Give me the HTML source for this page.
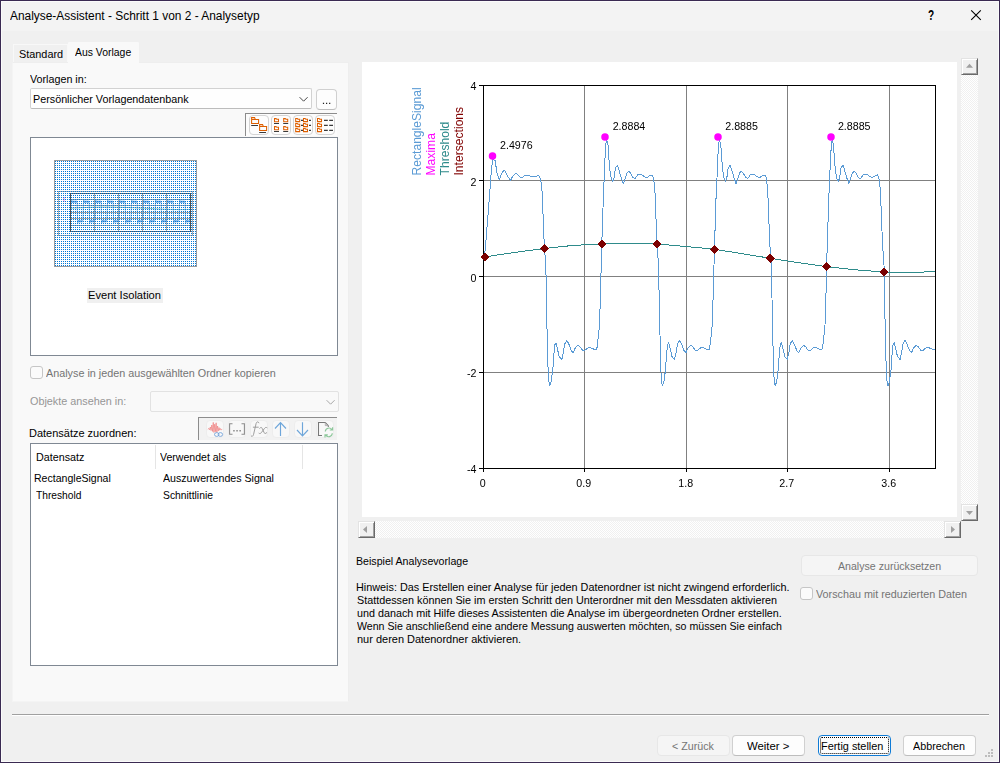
<!DOCTYPE html>
<html lang="de"><head><meta charset="utf-8"><title>Analyse-Assistent - Schritt 1 von 2 - Analysetyp</title>
<style>
html,body{margin:0;padding:0;width:1000px;height:763px;overflow:hidden;background:#f0f0f0;font-family:'Liberation Sans',sans-serif}
#win{position:absolute;left:0;top:0;width:998px;height:761px;border:1px solid #3a2a52;background:#f0f0f0}
#win>*{margin-left:-1px;margin-top:-1px}
.t{position:absolute;white-space:pre;line-height:16px;height:16px;transform-origin:0 0}
.btn{box-sizing:border-box;border:1px solid #d0d0d0;border-bottom-color:#bdbdbd;border-radius:4px;background:#fdfdfd}
.btn.dis{border-color:#e7e7e7;background:#f5f5f5}
.tb{box-sizing:border-box;border:1px solid #d4d4d4;border-radius:4px;background:#fdfdfd;position:absolute;width:20px;height:20px}
.tb.dis{border-color:#ededed;background:#f8f8f8}
.sb{position:absolute;box-sizing:border-box;width:17px;height:17px;background:#f0f0f0;border:1px solid;border-color:#e3e3e3 #696969 #696969 #e3e3e3;box-shadow:inset 1px 1px 0 #fff,inset -1px -1px 0 #a0a0a0}
.track{position:absolute;background:repeating-conic-gradient(#fff 0% 25%,#f0f0f0 0% 50%) 0 0/2px 2px}
.chk{position:absolute;box-sizing:border-box;width:13px;height:13px;border:1px solid #c6c6c6;border-radius:3px;background:#fbfbfb}
</style></head><body>
<div id="win">
<div style="position:absolute;left:1px;top:1px;width:998px;height:30px;background:#f3f3f3"></div>
<div style="position:absolute;left:1px;top:1px;width:998px;height:761px;box-sizing:border-box;border:1px solid #fbfbfb;pointer-events:none;z-index:5"></div>
<svg style="position:absolute;left:925px;top:6px" width="64" height="20" viewBox="925 6 64 20"><path d="M971.2 10.3L980.8 19.9M980.8 10.3L971.2 19.9" stroke="#000" stroke-width="1.1" fill="none"/></svg>
<div class="t" style="left:928.2px;top:7px;font-size:14px;font-weight:bold;color:#000;transform:scaleX(0.72)">?</div>
<div style="position:absolute;left:12px;top:62px;width:337px;height:640px;box-sizing:border-box;background:#f9f9f9;border:1px solid #eeeeee;border-left-color:#f4f4f4;border-bottom-color:#f4f4f4"></div>
<div style="position:absolute;left:13px;top:44px;width:55px;height:18px;box-sizing:border-box;background:#f0f0f0;border:1px solid #f8f8f8;border-bottom:none"></div>
<div style="position:absolute;left:68px;top:42px;width:71px;height:21px;background:#f9f9f9;border-radius:1px 1px 0 0"></div>
<div style="position:absolute;left:30px;top:88px;width:282px;height:21px;box-sizing:border-box;border:1px solid #d2d2d2;border-bottom-color:#bcbcbc;border-radius:2px;background:#fefefe"><svg style="position:absolute;left:267.6px;top:7px" width="10" height="7" viewBox="0 0 10 7"><path d="M0.6 1.2L4.6 5.2L8.6 1.2" fill="none" stroke="#484848" stroke-width="1"/></svg></div>
<div class="btn" style="position:absolute;left:316px;top:89px;width:21px;height:21px;"><svg style="position:absolute;left:0;top:0" width="19" height="19" viewBox="0 0 19 19"><path d="M5.9 13.4h1.2M9 13.4h1.2M12.1 13.4h1.2" stroke="#222" stroke-width="1.2"/></svg></div>
<div style="position:absolute;left:245px;top:113px;width:92px;height:23px;box-sizing:border-box;background:#fcfcfc;border-left:1px solid #8c8c8c;border-top:1px solid #8c8c8c"></div>
<div style="position:absolute;left:30px;top:137px;width:308px;height:219px;box-sizing:border-box;border:1px solid #7f8893;background:#fff"></div>
<div style="position:absolute;left:87px;top:288px;width:76px;height:15px;background:#f0f0f0"></div>
<div class="chk" style="left:30px;top:366px"></div>
<div style="position:absolute;left:150px;top:391px;width:189px;height:21px;box-sizing:border-box;border:1px solid #e2e2e2;border-radius:2px;background:#f9f9f9"><svg style="position:absolute;left:175.2px;top:7px" width="10" height="7" viewBox="0 0 10 7"><path d="M0.6 1.2L4.6 5.2L8.6 1.2" fill="none" stroke="#a8a8a8" stroke-width="1"/></svg></div>
<div style="position:absolute;left:198px;top:417px;width:139px;height:23px;box-sizing:border-box;background:#f2f2f2;border-left:1px solid #8c8c8c;border-top:1px solid #8c8c8c"></div>
<div style="position:absolute;left:30px;top:443px;width:308px;height:223px;box-sizing:border-box;border:1px solid #7f8893;background:#fff"><div style="position:absolute;left:124px;top:1px;width:1px;height:24px;background:#e5e5e5"></div><div style="position:absolute;left:271px;top:1px;width:1px;height:24px;background:#e5e5e5"></div></div>
<svg style="position:absolute;left:362px;top:62px;will-change:transform" width="595" height="455" viewBox="362 62 595 455" font-family="Liberation Sans, sans-serif">
<rect x="362" y="62" width="595" height="455" fill="#fff"/>
<text transform="translate(421 175.5) rotate(-90)" font-size="12.12" fill="#5b9bd5">RectangleSignal</text>
<text transform="translate(435 175.5) rotate(-90)" font-size="12.12" fill="#ff00ff">Maxima</text>
<text transform="translate(449 175.5) rotate(-90)" font-size="12.12" fill="#2e8b8b">Threshold</text>
<text transform="translate(463 175.5) rotate(-90)" font-size="12.12" fill="#800000">Intersections</text>
<g shape-rendering="crispEdges" fill="#808080">
<rect x="584" y="86" width="1" height="382"/>
<rect x="686" y="86" width="1" height="382"/>
<rect x="787" y="86" width="1" height="382"/>
<rect x="889" y="86" width="1" height="382"/>
<rect x="484" y="180" width="451" height="1"/>
<rect x="484" y="276" width="451" height="1"/>
<rect x="484" y="372" width="451" height="1"/>
</g>
<polyline fill="none" stroke="#2e8b8b" stroke-width="1" shape-rendering="crispEdges" stroke-linejoin="round" points="483.5,257.3 484.7,257.0 500.0,254.6 520.0,251.7 544.5,248.5 565.0,246.2 585.0,244.7 601.8,243.9 630.0,243.4 656.8,243.9 680.0,246.0 700.0,247.8 714.5,249.3 740.0,253.3 770.3,258.3 800.0,262.9 826.7,266.7 855.0,269.8 883.8,272.0 910.0,272.4 921.0,272.5 925.0,271.8 935.0,271.5"/>
<polyline fill="none" stroke="#5b9bd5" stroke-width="1" shape-rendering="crispEdges" stroke-linejoin="round" points="483.5,257.5 484.3,256.0 485.5,247.0 487.2,225.0 489.2,200.0 490.4,183.2 491.6,168.0 492.8,159.2 495.2,160.8 496.8,172.0 499.2,179.6 502.0,172.8 504.4,170.2 507.6,176.0 510.4,180.6 512.8,176.0 516.0,173.0 520.4,177.2 522.4,177.4 524.4,175.4 529.6,175.4 530.8,176.6 536.4,176.4 538.0,175.2 539.6,176.4 540.8,180.8 541.4,185.0 542.2,193.0 544.2,244.0 545.8,265.0 546.5,298.0 546.9,325.0 547.2,335.0 547.9,365.0 548.8,381.0 549.8,386.0 551.2,381.0 552.8,370.0 553.8,355.0 554.8,345.0 556.0,342.8 557.2,348.0 559.2,356.5 561.8,359.5 563.2,353.0 564.8,344.0 566.8,340.5 568.8,344.0 571.2,350.5 573.2,352.8 575.2,348.0 578.0,345.3 580.2,347.0 582.8,350.5 584.8,350.5 587.2,348.2 589.8,347.3 592.2,348.5 594.8,349.5 596.8,349.0 597.5,344.0 598.5,335.0 599.5,325.0 600.4,298.0 601.2,265.0 601.6,250.0 603.5,193.0 604.2,178.0 604.9,160.0 606.0,143.0 606.8,140.5 608.0,145.0 609.0,160.0 610.0,171.0 611.2,178.0 612.8,181.5 614.0,178.0 615.5,168.0 617.5,165.2 619.0,170.0 621.0,177.0 623.3,183.5 625.0,179.0 626.8,173.0 628.8,171.2 630.5,173.0 633.0,177.8 635.2,178.3 637.5,175.0 640.0,174.2 642.0,174.8 644.5,176.8 647.0,177.5 650.0,175.5 652.0,175.0 653.2,177.0 654.3,184.0 655.0,193.0 657.0,244.0 658.5,265.0 659.2,298.0 659.6,325.0 660.0,335.0 660.6,365.0 661.5,381.0 662.5,386.0 664.0,381.0 665.5,370.0 666.5,355.0 667.5,345.0 668.8,342.8 670.0,348.0 672.0,356.5 674.5,359.5 676.0,353.0 677.5,344.0 679.5,340.5 681.5,344.0 684.0,350.5 686.0,352.8 688.0,348.0 690.8,345.3 693.0,347.0 695.5,350.5 697.5,350.5 700.0,348.2 702.5,347.3 705.0,348.5 707.5,349.5 709.5,349.0 710.2,344.0 711.2,335.0 712.2,325.0 713.1,298.0 714.0,265.0 714.4,250.0 716.2,193.0 717.0,178.0 717.6,160.0 718.8,143.0 719.5,140.5 720.8,145.0 721.8,160.0 722.8,171.0 724.0,178.0 725.5,181.5 726.8,178.0 728.2,168.0 730.2,165.2 731.8,170.0 733.8,177.0 736.0,183.5 737.8,179.0 739.5,173.0 741.5,171.2 743.2,173.0 745.8,177.8 748.0,178.3 750.2,175.0 752.8,174.2 754.8,174.8 757.2,176.8 759.8,177.5 762.8,175.5 764.8,175.0 766.0,177.0 767.0,184.0 767.8,193.0 769.8,244.0 771.2,265.0 772.0,298.0 772.4,325.0 772.8,335.0 773.4,365.0 774.2,381.0 775.2,386.0 776.8,381.0 778.2,370.0 779.2,355.0 780.2,345.0 781.5,342.8 782.8,348.0 784.8,356.5 787.2,359.5 788.8,353.0 790.2,344.0 792.2,340.5 794.2,344.0 796.8,350.5 798.8,352.8 800.8,348.0 803.5,345.3 805.8,347.0 808.2,350.5 810.2,350.5 812.8,348.2 815.2,347.3 817.8,348.5 820.2,349.5 822.2,349.0 823.0,344.0 824.0,335.0 825.0,325.0 825.9,298.0 826.7,265.0 827.1,250.0 829.0,193.0 829.7,178.0 830.4,160.0 831.5,143.0 832.3,140.5 833.5,145.0 834.5,160.0 835.5,171.0 836.7,178.0 838.3,181.5 839.5,178.0 841.0,168.0 843.0,165.2 844.5,170.0 846.5,177.0 848.8,183.5 850.5,179.0 852.3,173.0 854.3,171.2 856.0,173.0 858.5,177.8 860.7,178.3 863.0,175.0 865.5,174.2 867.5,174.8 870.0,176.8 872.5,177.5 875.5,175.5 877.5,175.0 878.7,177.0 879.8,184.0 880.5,193.0 882.5,244.0 884.0,265.0 884.7,298.0 885.1,325.0 885.5,335.0 886.1,365.0 887.0,381.0 888.0,386.0 889.5,381.0 891.0,370.0 892.0,355.0 893.0,345.0 894.3,342.8 895.5,348.0 897.5,356.5 900.0,359.5 901.5,353.0 903.0,344.0 905.0,340.5 907.0,344.0 909.5,350.5 911.5,352.8 913.5,348.0 916.3,345.3 918.5,347.0 921.0,350.5 923.0,350.5 925.5,348.2 928.0,347.3 930.5,348.5 933.0,349.5 935.0,349.0"/>
<g shape-rendering="crispEdges" fill="#000">
<rect x="483" y="85" width="453" height="1"/><rect x="483" y="468" width="453" height="1"/><rect x="483" y="85" width="1" height="384"/><rect x="935" y="85" width="1" height="384"/>
<rect x="479" y="85" width="4" height="1"/>
<rect x="479" y="180" width="4" height="1"/>
<rect x="479" y="276" width="4" height="1"/>
<rect x="479" y="372" width="4" height="1"/>
<rect x="479" y="468" width="4" height="1"/>
<rect x="483" y="469" width="1" height="3"/>
<rect x="584" y="469" width="1" height="3"/>
<rect x="686" y="469" width="1" height="3"/>
<rect x="787" y="469" width="1" height="3"/>
<rect x="889" y="469" width="1" height="3"/>
</g>
<path d="M480.1 257.0L484.7 252.4L489.3 257.0L484.7 261.6Z" fill="#7b0000" shape-rendering="crispEdges"/>
<path d="M539.9 248.5L544.5 243.9L549.1 248.5L544.5 253.1Z" fill="#7b0000" shape-rendering="crispEdges"/>
<path d="M597.2 243.9L601.8 239.3L606.4 243.9L601.8 248.5Z" fill="#7b0000" shape-rendering="crispEdges"/>
<path d="M652.2 243.9L656.8 239.3L661.4 243.9L656.8 248.5Z" fill="#7b0000" shape-rendering="crispEdges"/>
<path d="M709.9 249.3L714.5 244.7L719.1 249.3L714.5 253.9Z" fill="#7b0000" shape-rendering="crispEdges"/>
<path d="M765.7 258.3L770.3 253.7L774.9 258.3L770.3 262.9Z" fill="#7b0000" shape-rendering="crispEdges"/>
<path d="M822.1 266.7L826.7 262.1L831.3 266.7L826.7 271.3Z" fill="#7b0000" shape-rendering="crispEdges"/>
<path d="M879.2 272.0L883.8 267.4L888.4 272.0L883.8 276.6Z" fill="#7b0000" shape-rendering="crispEdges"/>
<circle cx="492.5" cy="156" r="3.75" fill="#ff00ff"/>
<text x="500.0" y="148.8" font-size="10.67" fill="#000">2.4976</text>
<circle cx="605" cy="137" r="3.75" fill="#ff00ff"/>
<text x="612.7" y="129.8" font-size="10.67" fill="#000">2.8884</text>
<circle cx="718" cy="137" r="3.75" fill="#ff00ff"/>
<text x="725.3" y="129.8" font-size="10.67" fill="#000">2.8885</text>
<circle cx="831" cy="137" r="3.75" fill="#ff00ff"/>
<text x="837.9" y="129.8" font-size="10.67" fill="#000">2.8885</text>
<text x="476.5" y="90.20" font-size="10.67" text-anchor="end" fill="#000">4</text>
<text x="476.5" y="185.95" font-size="10.67" text-anchor="end" fill="#000">2</text>
<text x="476.5" y="281.70" font-size="10.67" text-anchor="end" fill="#000">0</text>
<text x="476.5" y="377.45" font-size="10.67" text-anchor="end" fill="#000">-2</text>
<text x="476.5" y="473.20" font-size="10.67" text-anchor="end" fill="#000">-4</text>
<text x="482.7" y="487" font-size="10.67" text-anchor="middle" fill="#000">0</text>
<text x="583.7" y="487" font-size="10.67" text-anchor="middle" fill="#000">0.9</text>
<text x="685.7" y="487" font-size="10.67" text-anchor="middle" fill="#000">1.8</text>
<text x="786.7" y="487" font-size="10.67" text-anchor="middle" fill="#000">2.7</text>
<text x="888.7" y="487" font-size="10.67" text-anchor="middle" fill="#000">3.6</text>
</svg>
<div class="track" style="left:961px;top:75px;width:17px;height:429px"></div>
<div class="track" style="left:375px;top:521px;width:569px;height:17px"></div>
<div class="sb" style="left:961px;top:58px"><svg width="15" height="15" viewBox="0 0 15 15" style="position:absolute;left:0;top:0"><path d="M4 8.7L7.5 4.7L11 8.7Z" fill="#a0a0a0"/></svg></div>
<div class="sb" style="left:961px;top:504px"><svg width="15" height="15" viewBox="0 0 15 15" style="position:absolute;left:0;top:0"><path d="M4 6L7.5 10L11 6Z" fill="#a0a0a0"/></svg></div>
<div class="sb" style="left:358px;top:521px"><svg width="15" height="15" viewBox="0 0 15 15" style="position:absolute;left:0;top:0"><path d="M8 4L4 7.5L8 11Z" fill="#a0a0a0"/></svg></div>
<div class="sb" style="left:944px;top:521px"><svg width="15" height="15" viewBox="0 0 15 15" style="position:absolute;left:0;top:0"><path d="M6 4L10 7.5L6 11Z" fill="#a0a0a0"/></svg></div>
<div class="btn dis" style="position:absolute;left:801px;top:555px;width:177px;height:21px;"></div>
<div class="chk" style="left:800px;top:587px"></div>
<div style="position:absolute;left:12px;top:714px;width:977px;height:1px;background:#a0a0a0"></div>
<div style="position:absolute;left:12px;top:715px;width:977px;height:1px;background:#fff"></div>
<div class="btn dis" style="position:absolute;left:657px;top:735px;width:73px;height:21px;"></div>
<div class="btn" style="position:absolute;left:732px;top:735px;width:73px;height:21px;"></div>
<div class="btn" style="position:absolute;left:818px;top:735px;width:73px;height:21px;border:1px solid #0f7bd6;"><div style="position:absolute;left:1px;top:1px;right:1px;bottom:1px;border:1px dotted #000;border-radius:2px"></div></div>
<div class="btn" style="position:absolute;left:903px;top:735px;width:73px;height:21px;"></div>
<div style="position:absolute;left:991px;top:749px;width:2px;height:2px;background:#bdbdbd"></div><div style="position:absolute;left:988px;top:752px;width:2px;height:2px;background:#bdbdbd"></div><div style="position:absolute;left:991px;top:752px;width:2px;height:2px;background:#bdbdbd"></div><div style="position:absolute;left:985px;top:755px;width:2px;height:2px;background:#bdbdbd"></div><div style="position:absolute;left:988px;top:755px;width:2px;height:2px;background:#bdbdbd"></div><div style="position:absolute;left:991px;top:755px;width:2px;height:2px;background:#bdbdbd"></div>
<div id="t_title" class="t" style="left:10.30px;top:8.04px;font-size:12px;color:#000;transform:scaleX(0.9924);">Analyse-Assistent - Schritt 1 von 2 - Analysetyp</div>
<div id="t_tab1" class="t" style="left:18.50px;top:45.62px;font-size:11.5px;color:#000;transform:scaleX(0.9457);">Standard</div>
<div id="t_tab2" class="t" style="left:75.00px;top:44.02px;font-size:11.5px;color:#000;transform:scaleX(0.9065);">Aus Vorlage</div>
<div id="t_vorl" class="t" style="left:30.00px;top:70.52px;font-size:11.5px;color:#000;transform:scaleX(0.9333);">Vorlagen in:</div>
<div id="t_combo" class="t" style="left:32.56px;top:90.52px;font-size:11.5px;color:#000;transform:scaleX(0.9364);">Persönlicher Vorlagendatenbank</div>
<div id="t_event" class="t" style="left:87.63px;top:286.52px;font-size:11.5px;color:#000;transform:scaleX(0.9676);">Event Isolation</div>
<div id="t_chk1" class="t" style="left:46.00px;top:364.52px;font-size:11.5px;color:#747474;transform:scaleX(0.9388);">Analyse in jeden ausgewählten Ordner kopieren</div>
<div id="t_obj" class="t" style="left:30.00px;top:392.52px;font-size:11.5px;color:#969696;transform:scaleX(0.9412);">Objekte ansehen in:</div>
<div id="t_ds" class="t" style="left:29.05px;top:424.52px;font-size:11.5px;color:#000;transform:scaleX(0.9550);">Datensätze zuordnen:</div>
<div id="t_h1" class="t" style="left:35.57px;top:448.52px;font-size:11.5px;color:#000;transform:scaleX(0.9340);">Datensatz</div>
<div id="t_h2" class="t" style="left:160.00px;top:448.52px;font-size:11.5px;color:#000;transform:scaleX(0.9167);">Verwendet als</div>
<div id="t_r1a" class="t" style="left:33.88px;top:470.02px;font-size:11.5px;color:#000;transform:scaleX(0.9171);">RectangleSignal</div>
<div id="t_r1b" class="t" style="left:162.50px;top:470.02px;font-size:11.5px;color:#000;transform:scaleX(0.9233);">Auszuwertendes Signal</div>
<div id="t_r2a" class="t" style="left:35.50px;top:486.52px;font-size:11.5px;color:#000;transform:scaleX(0.8882);">Threshold</div>
<div id="t_r2b" class="t" style="left:162.50px;top:486.52px;font-size:11.5px;color:#000;transform:scaleX(0.8982);">Schnittlinie</div>
<div id="t_bsp" class="t" style="left:355.83px;top:552.52px;font-size:11.5px;color:#000;transform:scaleX(0.9229);">Beispiel Analysevorlage</div>
<div id="t_l1" class="t" style="left:355.81px;top:578.77px;font-size:11.5px;color:#000;transform:scaleX(0.9419);">Hinweis: Das Erstellen einer Analyse für jeden Datenordner ist nicht zwingend erforderlich.</div>
<div id="t_l2" class="t" style="left:356.75px;top:591.77px;font-size:11.5px;color:#000;transform:scaleX(0.9386);">Stattdessen können Sie im ersten Schritt den Unterordner mit den Messdaten aktivieren</div>
<div id="t_l3" class="t" style="left:356.75px;top:604.77px;font-size:11.5px;color:#000;transform:scaleX(0.9359);">und danach mit Hilfe dieses Assistenten die Analyse im übergeordneten Ordner erstellen.</div>
<div id="t_l4" class="t" style="left:356.75px;top:617.92px;font-size:11.5px;color:#000;transform:scaleX(0.9225);">Wenn Sie anschließend eine andere Messung auswerten möchten, so müssen Sie einfach</div>
<div id="t_l5" class="t" style="left:356.75px;top:630.62px;font-size:11.5px;color:#000;transform:scaleX(0.9547);">nur deren Datenordner aktivieren.</div>
<div id="t_reset" class="t" style="left:837.90px;top:557.82px;font-size:11.5px;color:#747474;transform:scaleX(0.9223);">Analyse zurücksetzen</div>
<div id="t_chk2" class="t" style="left:815.60px;top:585.52px;font-size:11.5px;color:#747474;transform:scaleX(0.9366);">Vorschau mit reduzierten Daten</div>
<div id="t_back" class="t" style="left:672.40px;top:737.82px;font-size:11.5px;color:#747474;transform:scaleX(0.9311);">&lt; Zurück</div>
<div id="t_next" class="t" style="left:746.80px;top:738.02px;font-size:11.5px;color:#000;transform:scaleX(0.9860);">Weiter &gt;</div>
<div id="t_fin" class="t" style="left:821.45px;top:738.02px;font-size:11.5px;color:#000;transform:scaleX(0.9477);">Fertig stellen</div>
<div id="t_cancel" class="t" style="left:912.50px;top:738.02px;font-size:11.5px;color:#000;transform:scaleX(0.9364);">Abbrechen</div>
<div class="tb" style="left:249px;top:115px"></div><div class="tb" style="left:271px;top:115px"></div><div class="tb" style="left:293px;top:115px"></div><div class="tb" style="left:315px;top:115px"></div><div class="tb dis" style="left:206px;top:420px;width:18px;height:18px"></div><div class="tb dis" style="left:228px;top:420px;width:18px;height:18px"></div><div class="tb dis" style="left:250px;top:420px;width:18px;height:18px"></div><div class="tb dis" style="left:272px;top:420px;width:18px;height:18px"></div><div class="tb dis" style="left:294px;top:420px;width:18px;height:18px"></div><div class="tb dis" style="left:316px;top:420px;width:18px;height:18px"></div>
<svg style="position:absolute;left:245px;top:113px" width="92" height="24" viewBox="245 113 92 24" fill="none"><path d="M251.60 117.60H254.60L255.30 119.40H258.60V123.50H251.60ZM251.6 119.4H255.6" stroke="#de5f00" stroke-width="1.05"/><path d="M259.60 124.60H262.60L263.30 126.40H266.60V130.50H259.60ZM259.6 126.4H263.6" stroke="#de5f00" stroke-width="1.05"/><path d="M251.2 125.5H258M259.2 132.5H266" stroke="#3a3a3a" stroke-width="1"/><path d="M274.50 118.60H276.10L276.80 119.28H278.50V121.70H274.50ZM274.50 126.60H276.10L276.80 127.28H278.50V129.70H274.50ZM283.70 118.60H285.30L286.00 119.28H287.70V121.70H283.70ZM283.70 126.60H285.30L286.00 127.28H287.70V129.70H283.70Z" stroke="#de5f00" stroke-width="1.05"/><path d="M274.0 123.5H279.0M274.0 131.5H279.0M283.2 123.5H288.2M283.2 131.5H288.2" stroke="#3a3a3a" stroke-width="1.1"/><path d="M301 120.4H303M309 120.4H311M301 125.4H303M309 125.4H311M301 130.4H303M309 130.4H311" stroke="#3a3a3a" stroke-width="1.1"/><path d="M295.70 118.50H297.30L298.00 119.18H299.70V121.60H295.70ZM303.50 118.50H305.10L305.80 119.18H307.50V121.60H303.50ZM295.70 123.50H297.30L298.00 124.18H299.70V126.60H295.70ZM303.50 123.50H305.10L305.80 124.18H307.50V126.60H303.50ZM295.70 128.50H297.30L298.00 129.18H299.70V131.60H295.70ZM303.50 128.50H305.10L305.80 129.18H307.50V131.60H303.50Z" stroke="#de5f00" stroke-width="1.05"/><path d="M324 120.4H327.8M329.2 120.4H333M324 125.4H327.8M329.2 125.4H333M324 130.4H327.8M329.2 130.4H333" stroke="#3a3a3a" stroke-width="1.1"/><path d="M317.50 118.50H319.10L319.80 119.18H321.50V121.60H317.50ZM317.50 123.50H319.10L319.80 124.18H321.50V126.60H317.50ZM317.50 128.50H319.10L319.80 129.18H321.50V131.60H317.50Z" stroke="#de5f00" stroke-width="1.05"/></svg>
<svg style="position:absolute;left:198px;top:417px" width="139" height="24" viewBox="198 417 139 24" fill="none"><path d="M207.8 429.4L208.90 428.4L209.60 429.8L210.35 427.0L211.05 430.5L211.80 425.0L212.50 431.4L213.25 422.4L213.95 432.5L214.70 424.2L215.40 431.7L216.15 422.8L216.85 432.4L217.60 426.0L218.30 430.9L219.05 427.6L219.75 430.2L220.50 428.6L221.20 429.8L222.2 429.4" stroke="#ef8080" stroke-width="0.7" stroke-linejoin="round"/><ellipse cx="216.7" cy="434.5" rx="2.2" ry="1.9" stroke="#6f9fd8" stroke-width="0.85"/><ellipse cx="220.4" cy="434.5" rx="2.2" ry="1.9" stroke="#6f9fd8" stroke-width="0.85"/><path d="M232.5 423.7H229.6V434.3H232.5M241.5 423.7H244.4V434.3H241.5" stroke="#8a8a8a" stroke-width="1.05"/><path d="M233.2 430.7h1.5M236.3 430.7h1.5M239.4 430.7h1.5" stroke="#8a8a8a" stroke-width="1.5"/><path d="M258.9 422.8C258.3 421.3 256.7 421.4 256.1 423.5L253.6 434.3C253.1 436.4 251.9 436.9 251.2 435.9M253.3 427.2H258.3M259.7 428.3C260.7 426.9 261.8 427.2 262.3 428.6L264 432.4C264.5 433.8 265.6 434 266.7 432.7M267 427.7C265.9 426.9 265.2 427.5 264.3 428.7L261.6 432.3C260.7 433.5 260 434 259 433.3" stroke="#9a9a9a" stroke-width="0.95" stroke-linecap="round"/><path d="M280.5 436V422.6M275 428.5L280.5 422.7L286 428.5" stroke="#6ea6da" stroke-width="1.15"/><path d="M302.5 422.2V435.6M297 430L302.5 435.8L308 430" stroke="#6ea6da" stroke-width="1.15"/><path d="M322 435.5H318.5V422.5H325.3L328.3 425.6V427" stroke="#777" stroke-width="1.05"/><path d="M325.3 422.5V425.6H328.3" stroke="#aaa" stroke-width="0.9"/><path d="M325.3 431.5A3.7 3.7 0 0 1 332 429.6M332.6 427.2V430H329.8M332.3 433.3A3.7 3.7 0 0 1 325.6 435.2M325 437.6V434.8H327.8" stroke="#8cc79a" stroke-width="1.15"/></svg>
<svg style="position:absolute;left:54px;top:160px" width="143" height="107" viewBox="54 160 143 107" fill="none"><defs><pattern id="dith" x="0" y="0" width="2" height="2" patternUnits="userSpaceOnUse"><rect x="1" y="1" width="1" height="1" fill="#0078d7"/></pattern></defs><rect x="54" y="160" width="143" height="107" fill="#fff"/><g shape-rendering="crispEdges"><rect x="58.5" y="191.5" width="134" height="44" stroke="#adadad"/><path d="M71 199.5H190M71 205.5H190M71 212.5H190M71 218.5H190M71 225.5H190M94.5 194V231M118.5 194V231M142.5 194V231M166.5 194V231" stroke="#a6a6a6"/></g><path d="M71 208.2C100 206.5 120 207 150 208.5S180 209.6 190 209.4" stroke="#7fbcbc" stroke-width="0.9"/><path d="M70.8 210L71.6 199.5L72.4 203L73.4 201.6L77.1 201.9L77.6 223.6L78.4 220L79.4 221.6L82.8 221.2L83.6 199.5L84.4 203L85.4 201.6L89.1 201.9L89.6 223.6L90.4 220L91.4 221.6L94.8 221.2L95.6 199.5L96.4 203L97.4 201.6L101.1 201.9L101.6 223.6L102.4 220L103.4 221.6L106.8 221.2L107.6 199.5L108.4 203L109.4 201.6L113.1 201.9L113.6 223.6L114.4 220L115.4 221.6L118.8 221.2L119.6 199.5L120.4 203L121.4 201.6L125.1 201.9L125.6 223.6L126.4 220L127.4 221.6L130.8 221.2L131.6 199.5L132.4 203L133.4 201.6L137.1 201.9L137.6 223.6L138.4 220L139.4 221.6L142.8 221.2L143.6 199.5L144.4 203L145.4 201.6L149.1 201.9L149.6 223.6L150.4 220L151.4 221.6L154.8 221.2L155.6 199.5L156.4 203L157.4 201.6L161.1 201.9L161.6 223.6L162.4 220L163.4 221.6L166.8 221.2L167.6 199.5L168.4 203L169.4 201.6L173.1 201.9L173.6 223.6L174.4 220L175.4 221.6L178.8 221.2L179.6 199.5L180.4 203L181.4 201.6L185.1 201.9L185.6 223.6L186.4 220L187.4 221.6L190.8 221.2" stroke="#5b9bd5" stroke-width="0.9" stroke-linejoin="round" opacity="0.6"/><rect x="71.8" y="200.6" width="5.2" height="2.2" fill="#3d8ad8" opacity="0.55"/><rect x="78.0" y="220" width="4.6" height="2.4" fill="#3d8ad8" opacity="0.55"/><rect x="83.8" y="200.6" width="5.2" height="2.2" fill="#3d8ad8" opacity="0.55"/><rect x="90.0" y="220" width="4.6" height="2.4" fill="#3d8ad8" opacity="0.55"/><rect x="95.8" y="200.6" width="5.2" height="2.2" fill="#3d8ad8" opacity="0.55"/><rect x="102.0" y="220" width="4.6" height="2.4" fill="#3d8ad8" opacity="0.55"/><rect x="107.8" y="200.6" width="5.2" height="2.2" fill="#3d8ad8" opacity="0.55"/><rect x="114.0" y="220" width="4.6" height="2.4" fill="#3d8ad8" opacity="0.55"/><rect x="119.8" y="200.6" width="5.2" height="2.2" fill="#3d8ad8" opacity="0.55"/><rect x="126.0" y="220" width="4.6" height="2.4" fill="#3d8ad8" opacity="0.55"/><rect x="131.8" y="200.6" width="5.2" height="2.2" fill="#3d8ad8" opacity="0.55"/><rect x="138.0" y="220" width="4.6" height="2.4" fill="#3d8ad8" opacity="0.55"/><rect x="143.8" y="200.6" width="5.2" height="2.2" fill="#3d8ad8" opacity="0.55"/><rect x="150.0" y="220" width="4.6" height="2.4" fill="#3d8ad8" opacity="0.55"/><rect x="155.8" y="200.6" width="5.2" height="2.2" fill="#3d8ad8" opacity="0.55"/><rect x="162.0" y="220" width="4.6" height="2.4" fill="#3d8ad8" opacity="0.55"/><rect x="167.8" y="200.6" width="5.2" height="2.2" fill="#3d8ad8" opacity="0.55"/><rect x="174.0" y="220" width="4.6" height="2.4" fill="#3d8ad8" opacity="0.55"/><rect x="179.8" y="200.6" width="5.2" height="2.2" fill="#3d8ad8" opacity="0.55"/><rect x="186.0" y="220" width="4.6" height="2.4" fill="#3d8ad8" opacity="0.55"/><rect x="63" y="197" width="2" height="5" fill="#f4b6f0" opacity="0.8"/><rect x="70.5" y="193.5" width="120" height="38" stroke="#505050" shape-rendering="crispEdges"/><rect x="54.5" y="160.5" width="142" height="106" stroke="#9c9c9c" shape-rendering="crispEdges"/><rect x="55" y="161" width="141" height="105" fill="url(#dith)" shape-rendering="crispEdges"/></svg>
</div></body></html>
